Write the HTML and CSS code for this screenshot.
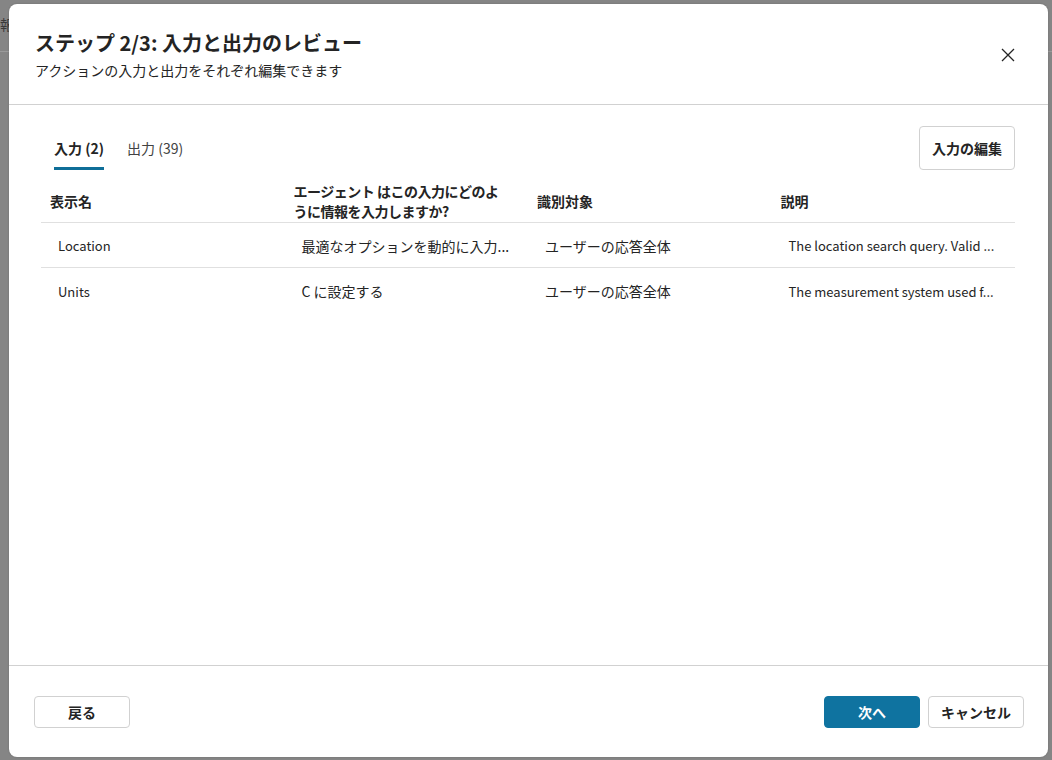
FILE: index.html
```html
<!DOCTYPE html>
<html lang="ja">
<head>
<meta charset="utf-8">
<title>ステップ 2/3</title>
<link rel="stylesheet" href="styles.css">
</head>
<body>
<div class="backpage">
  <div class="backtext">情報</div>
</div>
<div class="modal">
  <header class="mhead">
    <div class="titles">
      <h1 class="title">ステップ 2/3: 入力と出力のレビュー</h1>
      <p class="subtitle">アクションの入力と出力をそれぞれ編集できます</p>
    </div>
    <button class="close" aria-label="閉じる">
      <svg width="16" height="16" viewBox="0 0 16 16"><path d="M2 2 L14 14 M14 2 L2 14" stroke="#242424" stroke-width="1.3" fill="none"/></svg>
    </button>
  </header>
  <main class="mbody">
    <div class="toolbar">
      <div class="tabs">
        <div class="tab active">入力 (2)</div>
        <div class="tab">出力 (39)</div>
      </div>
      <button class="btn">入力の編集</button>
    </div>
    <div class="table">
      <div class="row head">
        <div class="cell">表示名</div>
        <div class="cell wrapcol">エージェント はこの入力にどのように情報を入力しますか?</div>
        <div class="cell">識別対象</div>
        <div class="cell">説明</div>
      </div>
      <div class="row">
        <div class="cell">Location</div>
        <div class="cell jp">最適なオプションを動的に入力...</div>
        <div class="cell jp">ユーザーの応答全体</div>
        <div class="cell">The location search query. Valid ...</div>
      </div>
      <div class="row last">
        <div class="cell">Units</div>
        <div class="cell jp">C に設定する</div>
        <div class="cell jp">ユーザーの応答全体</div>
        <div class="cell">The measurement system used f...</div>
      </div>
    </div>
  </main>
  <footer class="mfoot">
    <button class="btn fbtn">戻る</button>
    <div class="right">
      <button class="btn fbtn primary">次へ</button>
      <button class="btn fbtn">キャンセル</button>
    </div>
  </footer>
</div>
</body>
</html>
```
FILE: styles.css
```css
* { box-sizing: border-box; }
html, body { margin: 0; height: 100%; }
body {
  background: #858585;
  font-family: "Noto Sans CJK JP", "Noto Sans", sans-serif;
  color: #242424;
  overflow: hidden;
  position: relative;
}
.backpage {
  height: 52px;
  border-bottom: 1px solid #9a9a9a;
}
.backtext {
  padding: 14px 0 0 0;
  margin-left: -14px;
  font-size: 14px;
  color: #3a3a3a;
}
.modal {
  position: absolute;
  left: 9px;
  top: 4px;
  width: 1039px;
  height: 753px;
  background: #fff;
  border-radius: 8px;
  display: flex;
  flex-direction: column;
  box-shadow: 0 0 2px rgba(0,0,0,0.2);
}
.mhead {
  height: 101px;
  border-bottom: 1px solid #d1d1d1;
  display: flex;
  justify-content: space-between;
  padding: 25px 28px 0 26px;
}
.title {
  margin: 0;
  font-size: 20px;
  line-height: 28px;
  font-weight: 700;
}
.subtitle {
  margin: 3px 0 0;
  font-size: 14px;
  line-height: 20px;
  font-weight: 400;
}
.close {
  border: 0;
  background: none;
  padding: 0;
  width: 24px;
  height: 24px;
  margin-top: 14px;
  display: flex;
  align-items: center;
  justify-content: center;
}
.mbody {
  flex: 1;
  padding: 21px 33px 0 32px;
}
.toolbar {
  display: flex;
  justify-content: space-between;
  align-items: flex-start;
}
.tabs {
  display: flex;
  padding-left: 13px;
}
.tab {
  height: 44px;
  display: flex;
  align-items: center;
  font-size: 14px;
  margin-right: 23px;
  padding-top: 2px;
  border-bottom: 3px solid transparent;
  color: #424242;
}
.tab.active {
  font-weight: 700;
  color: #242424;
  border-bottom-color: #0f6e98;
}
.btn {
  font-family: inherit;
  background: #fff;
  border: 1px solid #d1d1d1;
  border-radius: 4px;
  font-size: 14px;
  font-weight: 700;
  color: #242424;
  height: 44px;
  width: 96px;
  padding: 0;
}
.row {
  display: grid;
  grid-template-columns: repeat(4, 1fr);
  height: 45px;
  border-bottom: 1px solid #e0e0e0;
  align-items: center;
  padding-top: 1px;
}
.row.last { border-bottom: 0; }
.row.head {
  height: 53px;
  font-weight: 700;
  line-height: 20px;
  padding-top: 9px;
}
.cell {
  font-size: 13px;
  padding: 0 17px;
  white-space: nowrap;
  overflow: hidden;
}
.cell.jp { font-size: 14px; }
.row.head .cell {
  font-size: 14px;
  padding: 0 10px 0 9px;
  white-space: normal;
}
.row.head .cell.wrapcol {
  letter-spacing: -0.5px;
  padding-right: 22px;
}
.mfoot {
  height: 92px;
  border-top: 1px solid #d1d1d1;
  display: flex;
  justify-content: space-between;
  align-items: flex-start;
  padding: 30px 24px 0 25px;
}
.right { display: flex; gap: 8px; }
.fbtn { height: 32px; font-size: 14px; }
.primary {
  background: #0f73a0;
  border-color: #0f73a0;
  color: #fff;
}
```
